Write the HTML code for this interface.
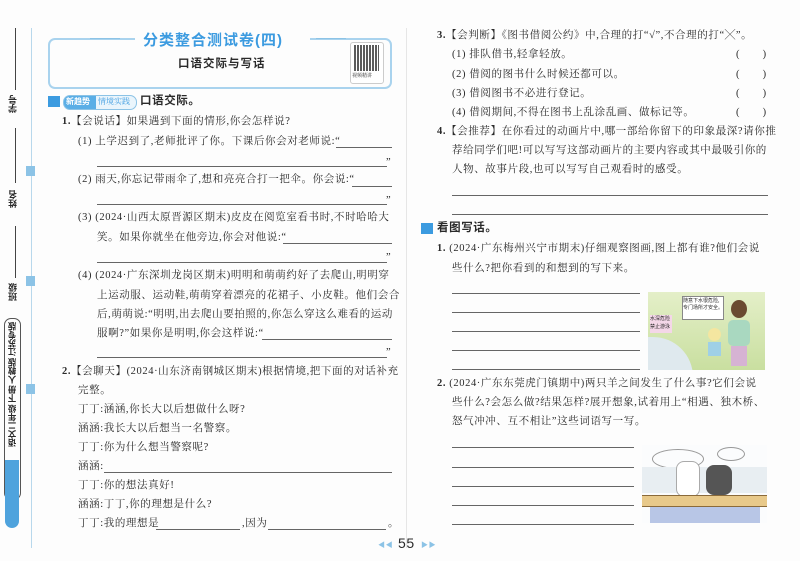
<!DOCTYPE html>
<html><head><meta charset="utf-8"><style>
body{margin:0;width:800px;height:561px;background:#fdfdfd;position:relative;overflow:hidden;font-family:"Liberation Serif","Noto Serif CJK SC",serif;color:#2a2a2a}
.t{position:absolute;font-size:10.5px;white-space:nowrap;letter-spacing:0.6px;line-height:12px}
.l{position:absolute;height:1px;background:#666}
.b{font-family:"Liberation Sans","Noto Sans CJK SC",sans-serif;font-weight:bold}
.v{position:absolute;writing-mode:vertical-rl;transform:rotate(180deg);font-family:"Noto Sans CJK SC",sans-serif;font-size:9px;font-weight:bold}
</style></head><body>
<!-- left margin -->
<div style="position:absolute;left:15px;top:28px;width:1px;height:62px;background:#444"></div>
<div style="position:absolute;left:15px;top:128px;width:1px;height:55px;background:#444"></div>
<div style="position:absolute;left:15px;top:226px;width:1px;height:52px;background:#444"></div>
<div class="v" style="left:6px;top:95px">学号</div>
<div class="v" style="left:6px;top:190px">姓名</div>
<div class="v" style="left:6px;top:283px">班级</div>
<div style="position:absolute;left:31px;top:28px;width:1px;height:520px;background:#b8d8ec"></div>
<div style="position:absolute;left:26px;top:166px;width:9px;height:10px;background:#8cc3e6"></div>
<div style="position:absolute;left:26px;top:276px;width:9px;height:10px;background:#8cc3e6"></div>
<div style="position:absolute;left:26px;top:384px;width:9px;height:10px;background:#8cc3e6"></div>
<div style="position:absolute;left:4px;top:318px;width:15px;height:180px;border:1px solid #555;border-radius:7px"></div>
<div style="position:absolute;left:5px;top:460px;width:14px;height:68px;background:#4fa3dd;border-radius:0 0 7px 7px"></div>
<div class="v" style="left:6px;top:322px;font-size:8.5px">语文二年级 下册 人教版 江苏专版</div>
<div style="position:absolute;left:406px;top:28px;width:1px;height:520px;background:#e6e6e6"></div>
<!-- title box -->
<div style="position:absolute;left:48px;top:38px;width:340px;height:47px;border:2px solid #a9d3ee;border-radius:7px"></div>
<div style="position:absolute;left:90px;top:38px;width:30px;height:1px;background:#8cc3e6"></div>
<div style="position:absolute;left:316px;top:38px;width:30px;height:1px;background:#8cc3e6"></div>
<div style="position:absolute;left:135px;top:30px;width:175px;height:18px;background:#fdfdfd"></div>
<div class="t b" style="left:143px;top:32px;font-size:15px;line-height:18px;color:#3c9be0;letter-spacing:1px">分类整合测试卷(四)</div>
<div class="t b" style="left:178px;top:58px;font-size:11.5px;letter-spacing:1px">口语交际与写话</div>
<div style="position:absolute;left:350px;top:42px;width:32px;height:40px;background:#fff;border:1px solid #ccc;border-radius:3px"></div>
<div style="position:absolute;left:354px;top:45px;width:25px;height:26px;background:repeating-linear-gradient(90deg,#333 0 2px,#fff 2px 3px),#333;opacity:.8"></div>
<div class="t" style="left:352px;top:74px;font-size:5px;line-height:6px;letter-spacing:0">视频精讲</div>
<!-- section 1 -->
<div style="position:absolute;left:48px;top:96px;width:12px;height:11px;background:#3c9be0"></div>
<div style="position:absolute;left:63px;top:95px;width:72px;height:13px;border:1px solid #8cc3e6;border-radius:7px;background:linear-gradient(90deg,#5aaee6 0 32px,#eaf5fc 32px)"></div>
<div class="t b" style="left:66px;top:96px;font-size:8px;color:#fff;letter-spacing:0">新趋势</div>
<div class="t" style="left:98px;top:96px;font-size:8px;color:#3c9be0;letter-spacing:0">情境实践</div>
<div class="t b" style="left:140px;top:95px;font-size:11.5px">口语交际。</div>
<div class="t" style="left:62px;top:116px"><b>1.</b>【会说话】如果遇到下面的情形,你会怎样说?</div>
<div class="t" style="left:78px;top:136px">(1) 上学迟到了,老师批评了你。下课后你会对老师说:“</div>
<div class="l" style="left:336px;top:147px;width:56px"></div>
<div class="l" style="left:97px;top:166px;width:290px"></div><div class="t" style="left:386px;top:157px">”</div>
<div class="t" style="left:78px;top:174px">(2) 雨天,你忘记带雨伞了,想和亮亮合打一把伞。你会说:“</div>
<div class="l" style="left:352px;top:186px;width:40px"></div>
<div class="l" style="left:97px;top:204px;width:290px"></div><div class="t" style="left:386px;top:195px">”</div>
<div class="t" style="left:78px;top:212px">(3) (2024·山西太原晋源区期末)皮皮在阅览室看书时,不时哈哈大</div>
<div class="t" style="left:97px;top:232px">笑。如果你就坐在他旁边,你会对他说:“</div>
<div class="l" style="left:283px;top:243px;width:109px"></div>
<div class="l" style="left:97px;top:262px;width:290px"></div><div class="t" style="left:386px;top:252px">”</div>
<div class="t" style="left:78px;top:270px">(4) (2024·广东深圳龙岗区期末)明明和萌萌约好了去爬山,明明穿</div>
<div class="t" style="left:97px;top:290px">上运动服、运动鞋,萌萌穿着漂亮的花裙子、小皮鞋。他们会合</div>
<div class="t" style="left:97px;top:309px">后,萌萌说:“明明,出去爬山要拍照的,你怎么穿这么难看的运动</div>
<div class="t" style="left:97px;top:328px">服啊?”如果你是明明,你会这样说:“</div>
<div class="l" style="left:262px;top:339px;width:130px"></div>
<div class="l" style="left:97px;top:357px;width:290px"></div><div class="t" style="left:386px;top:347px">”</div>
<div class="t" style="left:62px;top:366px"><b>2.</b>【会聊天】(2024·山东济南钢城区期末)根据情境,把下面的对话补充</div>
<div class="t" style="left:78px;top:385px">完整。</div>
<div class="t" style="left:78px;top:404px">丁丁:涵涵,你长大以后想做什么呀?</div>
<div class="t" style="left:78px;top:423px">涵涵:我长大以后想当一名警察。</div>
<div class="t" style="left:78px;top:442px">丁丁:你为什么想当警察呢?</div>
<div class="t" style="left:78px;top:461px">涵涵:</div><div class="l" style="left:104px;top:472px;width:288px"></div>
<div class="t" style="left:78px;top:480px">丁丁:你的想法真好!</div>
<div class="t" style="left:78px;top:499px">涵涵:丁丁,你的理想是什么?</div>
<div class="t" style="left:78px;top:518px">丁丁:我的理想是</div><div class="l" style="left:156px;top:529px;width:84px"></div>
<div class="t" style="left:242px;top:518px">,因为</div><div class="l" style="left:268px;top:529px;width:118px"></div><div class="t" style="left:388px;top:518px">。</div>
<div class="t" style="left:378px;top:539px;color:#8cc3e6;font-size:7px">◀◀</div>
<div class="t" style="left:398px;top:535px;font-family:'Liberation Sans',sans-serif;font-size:14px;line-height:16px">55</div>
<div class="t" style="left:421px;top:539px;color:#8cc3e6;font-size:7px">▶▶</div>
<!-- right column -->
<div class="t" style="left:437px;top:30px"><b>3.</b>【会判断】《图书借阅公约》中,合理的打“√”,不合理的打“╳”。</div>
<div class="t" style="left:452px;top:49px">(1) 排队借书,轻拿轻放。</div><div class="t" style="left:736px;top:49px">(&nbsp;&nbsp;&nbsp;&nbsp;&nbsp;&nbsp;&nbsp;)</div>
<div class="t" style="left:452px;top:69px">(2) 借阅的图书什么时候还都可以。</div><div class="t" style="left:736px;top:69px">(&nbsp;&nbsp;&nbsp;&nbsp;&nbsp;&nbsp;&nbsp;)</div>
<div class="t" style="left:452px;top:88px">(3) 借阅图书不必进行登记。</div><div class="t" style="left:736px;top:88px">(&nbsp;&nbsp;&nbsp;&nbsp;&nbsp;&nbsp;&nbsp;)</div>
<div class="t" style="left:452px;top:107px">(4) 借阅期间,不得在图书上乱涂乱画、做标记等。</div><div class="t" style="left:736px;top:107px">(&nbsp;&nbsp;&nbsp;&nbsp;&nbsp;&nbsp;&nbsp;)</div>
<div class="t" style="left:437px;top:126px"><b>4.</b>【会推荐】在你看过的动画片中,哪一部给你留下的印象最深?请你推</div>
<div class="t" style="left:452px;top:145px">荐给同学们吧!可以写写这部动画片的主要内容或其中最吸引你的</div>
<div class="t" style="left:452px;top:164px">人物、故事片段,也可以写写自己观看时的感受。</div>
<div class="l" style="left:452px;top:195px;width:316px"></div>
<div class="l" style="left:452px;top:214px;width:316px"></div>
<div style="position:absolute;left:421px;top:223px;width:12px;height:11px;background:#3c9be0"></div>
<div class="t b" style="left:437px;top:222px;font-size:11.5px">看图写话。</div>
<div class="t" style="left:437px;top:243px"><b>1.</b> (2024·广东梅州兴宁市期末)仔细观察图画,图上都有谁?他们会说</div>
<div class="t" style="left:452px;top:263px">些什么?把你看到的和想到的写下来。</div>
<div class="l" style="left:452px;top:293px;width:188px"></div>
<div class="l" style="left:452px;top:312px;width:188px"></div>
<div class="l" style="left:452px;top:331px;width:188px"></div>
<div class="l" style="left:452px;top:350px;width:188px"></div>
<div class="l" style="left:452px;top:369px;width:188px"></div>
<div style="position:absolute;left:648px;top:292px;width:117px;height:78px;background:linear-gradient(#e4efc8,#c9dfa0);overflow:hidden">
<div style="position:absolute;left:0;top:45px;width:45px;height:40px;background:#dfe9ee;border-radius:0 40px 0 0"></div>
<div style="position:absolute;left:34px;top:4px;width:40px;height:22px;background:#fff;border:1px solid #888;font-size:5px;line-height:7px;font-family:'Noto Sans CJK SC',sans-serif">随意下水很危险,专门场所才安全。</div>
<div style="position:absolute;left:2px;top:23px;width:22px;height:18px;background:#f4d7e8;font-size:5px;line-height:8px;font-family:'Noto Sans CJK SC',sans-serif">水深危险禁止游泳</div>
<div style="position:absolute;left:83px;top:8px;width:16px;height:18px;background:#6a4a30;border-radius:50%"></div>
<div style="position:absolute;left:80px;top:28px;width:22px;height:26px;background:#a9d8c0;border-radius:5px"></div>
<div style="position:absolute;left:83px;top:54px;width:16px;height:20px;background:#d6b3d3"></div>
<div style="position:absolute;left:60px;top:36px;width:13px;height:13px;background:#f4e6a0;border-radius:50%"></div>
<div style="position:absolute;left:60px;top:50px;width:13px;height:14px;background:#9fd0e6"></div>
</div>
<div class="t" style="left:437px;top:378px"><b>2.</b> (2024·广东东莞虎门镇期中)两只羊之间发生了什么事?它们会说</div>
<div class="t" style="left:452px;top:397px">些什么?会怎么做?结果怎样?展开想象,试着用上“相遇、独木桥、</div>
<div class="t" style="left:452px;top:416px">怒气冲冲、互不相让”这些词语写一写。</div>
<div class="l" style="left:452px;top:447px;width:182px"></div>
<div class="l" style="left:452px;top:467px;width:182px"></div>
<div class="l" style="left:452px;top:486px;width:182px"></div>
<div class="l" style="left:452px;top:505px;width:182px"></div>
<div class="l" style="left:452px;top:524px;width:182px"></div>
<div style="position:absolute;left:642px;top:445px;width:125px;height:78px;background:#fbfcfd;overflow:hidden">
<div style="position:absolute;left:10px;top:4px;width:50px;height:18px;border:1px solid #999;border-radius:50%"></div>
<div style="position:absolute;left:75px;top:2px;width:26px;height:12px;border:1px solid #999;border-radius:50%"></div>
<div style="position:absolute;left:0;top:22px;width:125px;height:26px;background:#e8eef2"></div>
<div style="position:absolute;left:34px;top:16px;width:22px;height:34px;background:#fff;border:1px solid #aaa;border-radius:8px"></div>
<div style="position:absolute;left:64px;top:20px;width:26px;height:30px;background:#555;border-radius:8px"></div>
<div style="position:absolute;left:0;top:50px;width:125px;height:10px;background:#e8c98a;border-top:1px solid #8a6a3a;border-bottom:1px solid #8a6a3a"></div>
<div style="position:absolute;left:8px;top:62px;width:110px;height:16px;background:#b8c6e6"></div>
</div>
</body></html>
